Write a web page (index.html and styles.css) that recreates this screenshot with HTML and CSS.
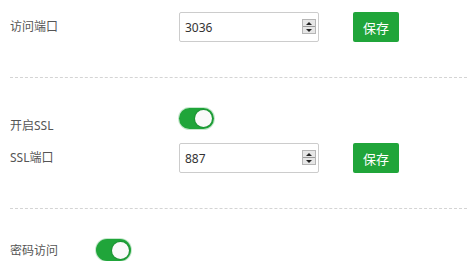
FILE: index.html
```html
<!DOCTYPE html>
<html lang="zh-CN">
<head>
<meta charset="utf-8">
<title>设置</title>
<link rel="stylesheet" href="styles.css">
</head>
<body>
<div class="panel">
  <div class="row row-input">
    <span class="label label-wide">访问端口</span>
    <div class="num-input">
      <input class="num-field" type="text" value="3036">
      <span class="spin"><span class="spin-up"></span><span class="spin-down"></span></span>
    </div>
    <button class="btn">保存</button>
  </div>
  <div class="divider"></div>
  <div class="row row-switch">
    <span class="label label-wide label-low">开启SSL</span>
    <span class="switch"><span class="knob"></span></span>
  </div>
  <div class="row row-input row-ssl">
    <span class="label label-wide">SSL端口</span>
    <div class="num-input">
      <input class="num-field" type="text" value="887">
      <span class="spin"><span class="spin-up"></span><span class="spin-down"></span></span>
    </div>
    <button class="btn">保存</button>
  </div>
  <div class="divider divider-2"></div>
  <div class="row row-pass">
    <span class="label label-short label-pass">密码访问</span>
    <span class="switch switch-lg"><span class="knob"></span></span>
  </div>
</div>
</body>
</html>
```
FILE: styles.css
```css
html, body {
  margin: 0;
  padding: 0;
  background: #fff;
}
body {
  font-family: "Noto Sans", "Noto Sans CJK SC", sans-serif;
  font-size: 12px;
  color: #555;
}
.panel {
  padding: 12px 0 0 10px;
}
.row {
  display: flex;
  align-items: center;
}
.label {
  font-size: 12px;
  line-height: 14px;
  color: #555;
}
.label-wide { width: 169px; }
.label-short { width: 86px; }
.label-pass { margin-top: 2px; }
.row-input { height: 30px; }
.num-input {
  position: relative;
  width: 140px;
  height: 30px;
  box-sizing: border-box;
  border: 1px solid #ccc;
  border-radius: 2px;
  background: #fff;
}
.num-field {
  width: 100%;
  height: 100%;
  box-sizing: border-box;
  border: 0;
  outline: none;
  padding: 0 22px 0 5px;
  font-family: "Noto Sans", sans-serif;
  font-size: 12px;
  color: #333;
  background: transparent;
}
.spin {
  position: absolute;
  right: 2px;
  top: 6px;
  width: 14px;
  height: 15px;
  display: flex;
  flex-direction: column;
  box-sizing: border-box;
  border: 1px solid #b5b5b5;
  background: #e6e6e6;
}
.spin-up, .spin-down {
  flex: 1;
  position: relative;
}
.spin-up { border-bottom: 1px solid #9a9a9a; }
.spin-up::after, .spin-down::after {
  content: "";
  position: absolute;
  left: 3px;
  width: 0;
  height: 0;
  border-left: 3px solid transparent;
  border-right: 3px solid transparent;
}
.spin-up::after {
  top: 2px;
  border-bottom: 3px solid #222;
}
.spin-down::after {
  top: 2px;
  border-top: 3px solid #222;
}
.btn {
  margin-left: 34px;
  width: 46px;
  height: 30px;
  border: 0;
  border-radius: 2px;
  background: #20a53a;
  color: #fff;
  font-family: "Noto Sans CJK SC", sans-serif;
  font-size: 13px;
  padding: 0;
}
.divider {
  margin-top: 35px;
  border-top: 1px dashed #d4d4d4;
}
.row-switch {
  margin-top: 30px;
  align-items: flex-start;
}
.label-low { margin-top: 11px; }
.switch {
  position: relative;
  width: 35px;
  height: 21px;
  border-radius: 11px;
  background: #20a53a;
  box-shadow: 0 0 0 1px rgba(32,165,58,0.25);
}
.switch-lg { height: 22px; }
.knob {
  position: absolute;
  right: 2px;
  top: 2px;
  width: 17px;
  height: 17px;
  border-radius: 50%;
  background: #fafafa;
  box-shadow: 0 0 1px 1px rgba(0,0,0,0.12);
}
.switch-lg .knob { top: 2.5px; }
.row-ssl { margin-top: 10px; }
.divider-2 { margin-top: 35px; }
.row-pass {
  margin-top: 30px;
  height: 22px;
}
```
